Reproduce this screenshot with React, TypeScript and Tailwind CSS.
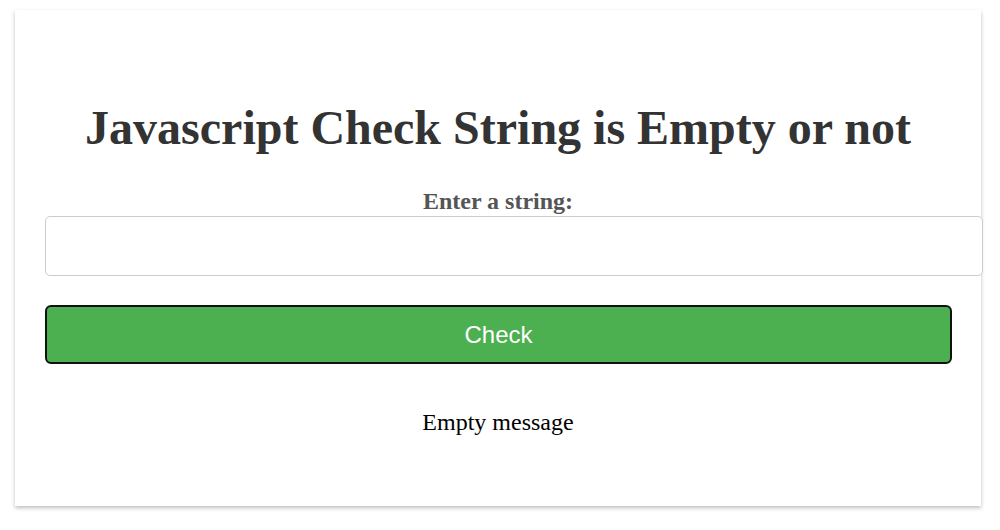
export default function App() {
  return (
    <div className="min-h-[530px] w-[1000px] bg-white pt-[10px] pl-[15px]">
      <div className="flex h-[496px] w-[966px] flex-col items-center bg-white px-[30px] pt-[94px] shadow-[0_2px_4px_rgba(0,0,0,0.25)]">
        <h1 className="text-[48px] font-bold leading-none text-[#333] [font-family:'Liberation_Serif',serif]">
          Javascript Check String is Empty or not
        </h1>
        <label className="mt-[37px] text-[24px] font-bold leading-none text-[#555] [font-family:'Liberation_Serif',serif]">
          Enter a string:
        </label>
        <input
          type="text"
          className="mt-[3px] h-[60px] w-[938px] shrink-0 self-start rounded-[5px] border border-[#ccc] bg-white px-[15px] outline-none"
        />
        <button className="mt-[29px] h-[59px] w-[907px] self-start rounded-[6px] border-2 border-[#111] bg-[#4caf50] text-[24px] text-white [font-family:'Liberation_Sans',sans-serif]">
          Check
        </button>
        <p className="mt-[46px] text-[24px] leading-none text-black [font-family:'Liberation_Serif',serif]">
          Empty message
        </p>
      </div>
    </div>
  );
}
